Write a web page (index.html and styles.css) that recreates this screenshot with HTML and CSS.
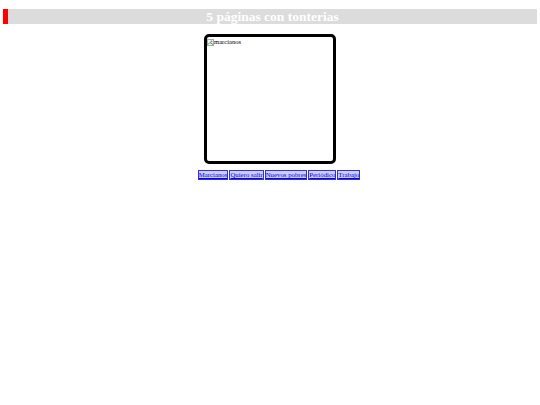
FILE: index.html
```html
<!DOCTYPE html>
<html>
<head>
<meta charset="utf-8">
<link rel="stylesheet" href="styles.css">
</head>
<body>
<h1 class="title">5 páginas con tonterias</h1>
<div class="frame">
  <div class="alt"><svg class="broken" width="7" height="7" viewBox="0 0 7 7"><rect x="0.5" y="0.5" width="6" height="6" fill="#f4f4f4" stroke="#aaa" stroke-width="1"/><path d="M1 5.5 L3 3.5 L6 5.5" fill="none" stroke="#4a9a3a" stroke-width="1"/><circle cx="4.5" cy="2.3" r="0.9" fill="#5a8ad0"/></svg>marcianos</div>
</div>
<nav class="links">
  <a href="#" class="btn">Marcianos</a><a href="#" class="btn">Quiero salir</a><a href="#" class="btn">Nuevos pobres</a><a href="#" class="btn">Periódico</a><a href="#" class="btn">Trabajo</a>
</nav>
</body>
</html>
```
FILE: styles.css
```css
html, body {
  margin: 0;
  padding: 0;
  background: #fff;
  font-family: "Liberation Serif", "Times New Roman", serif;
}
.title {
  margin: 9px 3px 0 3px;
  height: 15px;
  line-height: 15px;
  background: #dcdcdc;
  border-left: 5px solid #ff0000;
  color: #fff;
  font-size: 13.5px;
  font-weight: bold;
  text-align: center;
}
.frame {
  width: 126px;
  height: 124px;
  margin: 10px auto 0 auto;
  border: 3px solid #000;
  border-radius: 5px;
}
.alt {
  font-size: 6.6px;
  line-height: 8px;
  color: #000;
  padding: 1px 0 0 0;
  display: flex;
  align-items: center;
}
.broken {
  display: block;
}
.links {
  margin-top: 6px;
  display: flex;
  justify-content: center;
  gap: 1px;
  padding-left: 18px;
  font-size: 6.8px;
  line-height: 8px;
}
.btn {
  color: #0000ee;
  background: #ccccff;
  border: 1px solid #3333cc;
  padding: 0;
  text-decoration: underline;
}
```
